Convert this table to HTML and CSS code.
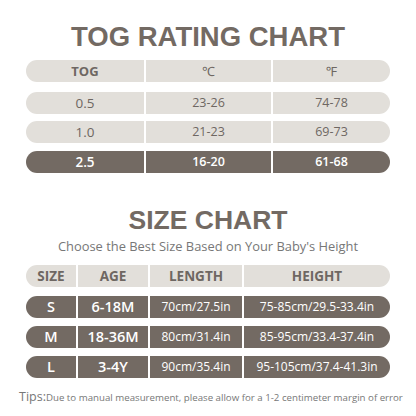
FILE: index.html
```html
<!DOCTYPE html>
<html>
<head>
<meta charset="utf-8">
<title>TOG Rating Chart</title>
<link rel="stylesheet" href="styles.css">
</head>
<body>
<div class="page">
	<h1 class="title tog-title">TOG RATING CHART</h1>
	<div class="chart tog">
		<div class="row head">
			<span class="b">TOG</span><span>℃</span><span>℉</span>
		</div>
		<div class="row">
			<span class="big">0.5</span><span>23-26</span><span>74-78</span>
		</div>
		<div class="row">
			<span class="big">1.0</span><span>21-23</span><span>69-73</span>
		</div>
		<div class="row dark">
			<span class="big">2.5</span><span>16-20</span><span>61-68</span>
		</div>
	</div>

	<h1 class="title size-title">SIZE CHART</h1>
	<p class="sub">Choose the Best Size Based on Your Baby's Height</p>
	<div class="chart size">
		<div class="row head">
			<span>SIZE</span><span>AGE</span><span>LENGTH</span><span>HEIGHT</span>
		</div>
		<div class="row dark">
			<span class="big">S</span><span class="big">6-18M</span><span>70cm/27.5in</span><span>75-85cm/29.5-33.4in</span>
		</div>
		<div class="row dark">
			<span class="big">M</span><span class="big">18-36M</span><span>80cm/31.4in</span><span>85-95cm/33.4-37.4in</span>
		</div>
		<div class="row dark">
			<span class="big">L</span><span class="big">3-4Y</span><span>90cm/35.4in</span><span>95-105cm/37.4-41.3in</span>
		</div>
	</div>

	<p class="tips"><span>Tips:</span>Due to manual measurement, please allow for a 1-2 centimeter margin of error</p>
</div>
</body>
</html>
```

FILE: styles.css
```css
body{
	margin:0;
	background:#fff;
	font-family:"Open Sans","Noto Sans",sans-serif;
	color:#6b6460;
}
.page{
	width:416px;
	height:416px;
	overflow:hidden;
}
.title{
	margin:0;
	text-align:center;
	font-family:"Liberation Sans",Arial,sans-serif;
	font-weight:bold;
	color:#736a63;
	line-height:1;
}
.tog-title{
	font-size:27.5px;
	padding-top:23px;
}
.size-title{
	font-size:26.5px;
	margin-top:34px;
}
.sub{
	margin:4px 0 0;
	text-align:center;
	font-size:12.9px;
	color:#777;
	line-height:18px;
}
.chart{
	margin:0 26px;
}
.tog{
	margin-top:9px;
}
.size{
	margin-top:10px;
}
.row{
	display:grid;
	gap:2px;
	height:22px;
	margin-bottom:8px;
}
.tog .row{
	grid-template-columns:118px 125px 117px;
}
.tog .row.head{
	margin-bottom:10px;
}
.tog .row:nth-child(2){
	margin-bottom:7px;
}
.size .row{
	grid-template-columns:50px 70px 92px 146px;
}
.size .row.head{
	margin-bottom:9px;
}
.row>span{
	display:flex;
	align-items:center;
	justify-content:center;
	background:#e2dfda;
	font-size:12.5px;
	line-height:22px;
}
.row>span:first-child{
	border-radius:11px 0 0 11px;
}
.row>span:last-child{
	border-radius:0 11px 11px 0;
}
.row .big{
	font-size:13.5px;
}
.tog .head>span{
	font-size:13px;
}
.tog .head>.b{
	font-weight:bold;
}
.tog .row>span{
	color:#6e6762;
}
.size .head>span{
	font-weight:bold;
	font-size:13.5px;
	color:#6e6762;
}
.row.dark>span{
	background:#736a63;
	color:#fff;
	font-weight:600;
}
.tog .row.dark>span{
	color:#fff;
}
.size .dark>span{
	font-size:12px;
	font-weight:500;
}
.size .dark>.big{
	font-size:14.5px;
	font-weight:600;
}
.tips{
	margin:11px 0 0 19px;
	font-size:9.7px;
	color:#777;
	white-space:nowrap;
	line-height:16px;
}
.tips>span{
	font-size:12.5px;
}
```
